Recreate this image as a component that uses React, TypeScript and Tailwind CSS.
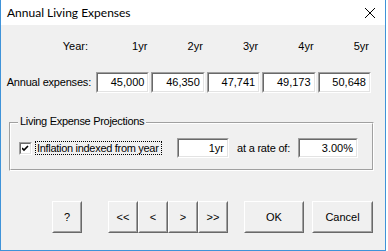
import React from "react";

const raisedOuter =
  "border border-t-white border-l-white border-b-[#696969] border-r-[#696969]";
const raisedInner =
  "border border-t-[#f0f0f0] border-l-[#f0f0f0] border-b-[#a0a0a0] border-r-[#a0a0a0]";
const sunkenOuter =
  "border border-t-[#a0a0a0] border-l-[#a0a0a0] border-b-white border-r-white";
const sunkenInner =
  "border border-t-[#696969] border-l-[#696969] border-b-[#e3e3e3] border-r-[#e3e3e3] bg-white";

function TextBox({ value, className }: { value: string; className: string }) {
  return (
    <div className={`${sunkenOuter} ${className}`}>
      <div className={`${sunkenInner} h-full flex items-center justify-end pr-[3px]`}>
        {value}
      </div>
    </div>
  );
}

function Button({ label, className }: { label: string; className: string }) {
  return (
    <div className={`${raisedOuter} ${className}`}>
      <div className={`${raisedInner} h-full flex items-center justify-center`}>
        {label}
      </div>
    </div>
  );
}

export default function App() {
  const years = ["1yr", "2yr", "3yr", "4yr", "5yr"];
  const expenses = ["45,000", "46,350", "47,741", "49,173", "50,648"];

  return (
    <div
      className="w-[388px] h-[251px] bg-white text-black text-[11px] leading-none"
      style={{ fontFamily: '"Liberation Sans", Arial, sans-serif' }}
    >
      <div className="w-[386px] h-[251px] flex flex-col border-l border-r border-b border-[#3f93d9]">
        {/* Title bar */}
        <div className="h-[25px] shrink-0 flex items-center justify-between pl-[6px] pr-[8px] bg-white">
          <span
            className="text-[12px] text-black"
            style={{ fontFamily: 'Lato, "Noto Sans", sans-serif' }}
          >
            Annual Living Expenses
          </span>
          <svg width="12" height="12" viewBox="0 0 12 12" className="mr-[1px]">
            <path d="M1 1 L11 11 M11 1 L1 11" stroke="#000" strokeWidth="1" />
          </svg>
        </div>

        {/* Body */}
        <div className="flex-1 bg-[#f0f0f0] flex flex-col">
          {/* Year row */}
          <div className="flex items-center h-[16px] mt-[13px]">
            <div className="w-[95px] text-right pr-[8px]">Year:</div>
            <div className="grid grid-cols-5 gap-[2px] w-[275px]">
              {years.map((y) => (
                <div key={y} className="text-right pr-[2px]">
                  {y}
                </div>
              ))}
            </div>
          </div>

          {/* Expenses row */}
          <div className="flex items-center mt-[18px]">
            <div className="w-[95px] text-right pr-[5px] whitespace-nowrap tracking-[-0.2px]">
              Annual expenses:
            </div>
            <div className="grid grid-cols-5 gap-[2px] w-[275px]">
              {expenses.map((v) => (
                <TextBox key={v} value={v} className="h-[21px]" />
              ))}
            </div>
          </div>

          {/* Group box */}
          <div className="relative ml-[8px] mt-[29px] w-[365px] border border-t-[#a0a0a0] border-l-[#a0a0a0] border-b-white border-r-white">
            <span className="absolute left-[8px] -top-[7px] px-[2px] bg-[#f0f0f0] whitespace-nowrap tracking-[-0.3px]">
              Living Expense Projections
            </span>
            <div className="border border-t-white border-l-white border-b-[#a0a0a0] border-r-[#a0a0a0] pt-[14px] pb-[11px] pl-[8px] flex items-center h-[47px]">
              <div className={`${sunkenOuter} w-[13px] h-[13px] shrink-0`}>
                <div className={`${sunkenInner} h-full flex items-center justify-center`}>
                  <svg width="7" height="7" viewBox="0 0 7 7">
                    <path d="M0 3 L2 5 L6 1" stroke="#000" strokeWidth="1.6" fill="none" />
                  </svg>
                </div>
              </div>
              <div className="ml-[3px] w-[127px] h-[14px] shrink-0 border border-dotted border-black flex items-center pl-[1px] whitespace-nowrap tracking-[-0.3px]">
                Inflation indexed from year
              </div>
              <TextBox value="1yr" className="ml-[15px] w-[52px] h-[20px] shrink-0" />
              <div className="ml-[8px] w-[61px] whitespace-nowrap tracking-[-0.2px]">
                at a rate of:
              </div>
              <TextBox value="3.00%" className="w-[60px] h-[20px] shrink-0" />
            </div>
          </div>

          {/* Buttons */}
          <div className="flex items-start mt-[30px]">
            <Button label="?" className="ml-[51px] w-[30px] h-[32px]" />
            <div className="flex ml-[26px]">
              <Button label="<<" className="w-[30px] h-[32px]" />
              <Button label="<" className="w-[30px] h-[32px]" />
              <Button label=">" className="w-[30px] h-[32px]" />
              <Button label=">>" className="w-[30px] h-[32px]" />
            </div>
            <Button label="OK" className="ml-[16px] w-[60px] h-[32px]" />
            <Button label="Cancel" className="ml-[8px] w-[61px] h-[32px]" />
          </div>
        </div>
      </div>
    </div>
  );
}
